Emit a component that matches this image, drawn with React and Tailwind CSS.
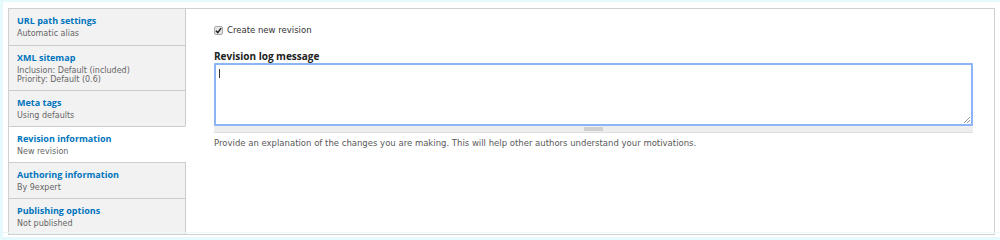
import React from "react";

const items = [
  { title: "URL path settings", sub: ["Automatic alias"] },
  { title: "XML sitemap", sub: ["Inclusion: Default (included)", "Priority: Default (0.6)"] },
  { title: "Meta tags", sub: ["Using defaults"] },
  { title: "Revision information", sub: ["New revision"], active: true },
  { title: "Authoring information", sub: ["By 9expert"] },
  { title: "Publishing options", sub: ["Not published"] },
];

export default function App() {
  return (
    <div className="w-[1000px] h-[240px] bg-white border-t-2 border-l-[3px] border-b-[3px] border-[#e6fafd] relative" style={{ fontFamily: '"DejaVu Sans", Verdana, sans-serif' }}>
      <div className="absolute left-0 right-0 bottom-[4px] h-px bg-[#eef6f8]" />
      <div className="ml-[5px] mt-[6px] w-[987px] h-[227px] border border-[#d0d0d0] flex">
        <div className="w-[177px] flex flex-col">
          {items.map((it, i) => (
            <div
              key={i}
              className={
                "px-[8px] pt-[6px] flex flex-col " +
                (it.sub.length > 1 ? "h-[45px] " : "h-[36px] ") +
                (i > 0 ? "border-t border-[#cccccc] " : "") +
                (it.active ? "bg-white border-r border-r-white" : "bg-[#f2f2f2] border-r border-r-[#cccccc]")
              }
            >
              <div className="text-[9px] font-bold text-[#0074bd] leading-[12px] mb-[3px]" style={{ fontFamily: '"Open Sans", sans-serif' }}>{it.title}</div>
              {it.sub.map((s, j) => (
                <div key={j} className="text-[8px] text-[#666] leading-[8.5px]">{s}</div>
              ))}
            </div>
          ))}
        </div>
        <div className="flex-1 pl-[28px] pr-[21px] pt-[15px]">
          <label className="flex items-center gap-[4px] text-[8.5px] text-[#333]">
            <span className="w-[9px] h-[9px] rounded-[2px] border border-[#aaa] bg-[#e5e5e5] flex items-center justify-center">
              <svg width="7" height="7" viewBox="0 0 8 8"><path d="M1 4.2 L3.2 6.4 L7 1.2" stroke="#222" strokeWidth="1.6" fill="none" /></svg>
            </span>
            Create new revision
          </label>
          <div className="mt-[13px] text-[10px] font-bold text-[#222] leading-[12px]" style={{ fontFamily: '"Open Sans", sans-serif' }}>Revision log message</div>
          <div className="mt-[1px] relative h-[63px] border-2 border-[#8db5f5] rounded-[1px]">
            <div className="absolute left-[3px] top-[4px] w-px h-[9px] bg-[#333]" />
            <svg className="absolute right-[1px] bottom-[1px]" width="6" height="6" viewBox="0 0 6 6"><path d="M6 0 L0 6 M6 3 L3 6" stroke="#999" strokeWidth="1" /></svg>
          </div>
          <div className="h-[7px] bg-[#eeeeee] border-b border-[#dddddd] flex justify-center items-center">
            <div className="w-[19px] h-[4px] bg-[#cfcfcf]" />
          </div>
          <div className="mt-[4px] text-[8.5px] text-[#595959]">Provide an explanation of the changes you are making. This will help other authors understand your motivations.</div>
        </div>
      </div>
    </div>
  );
}
